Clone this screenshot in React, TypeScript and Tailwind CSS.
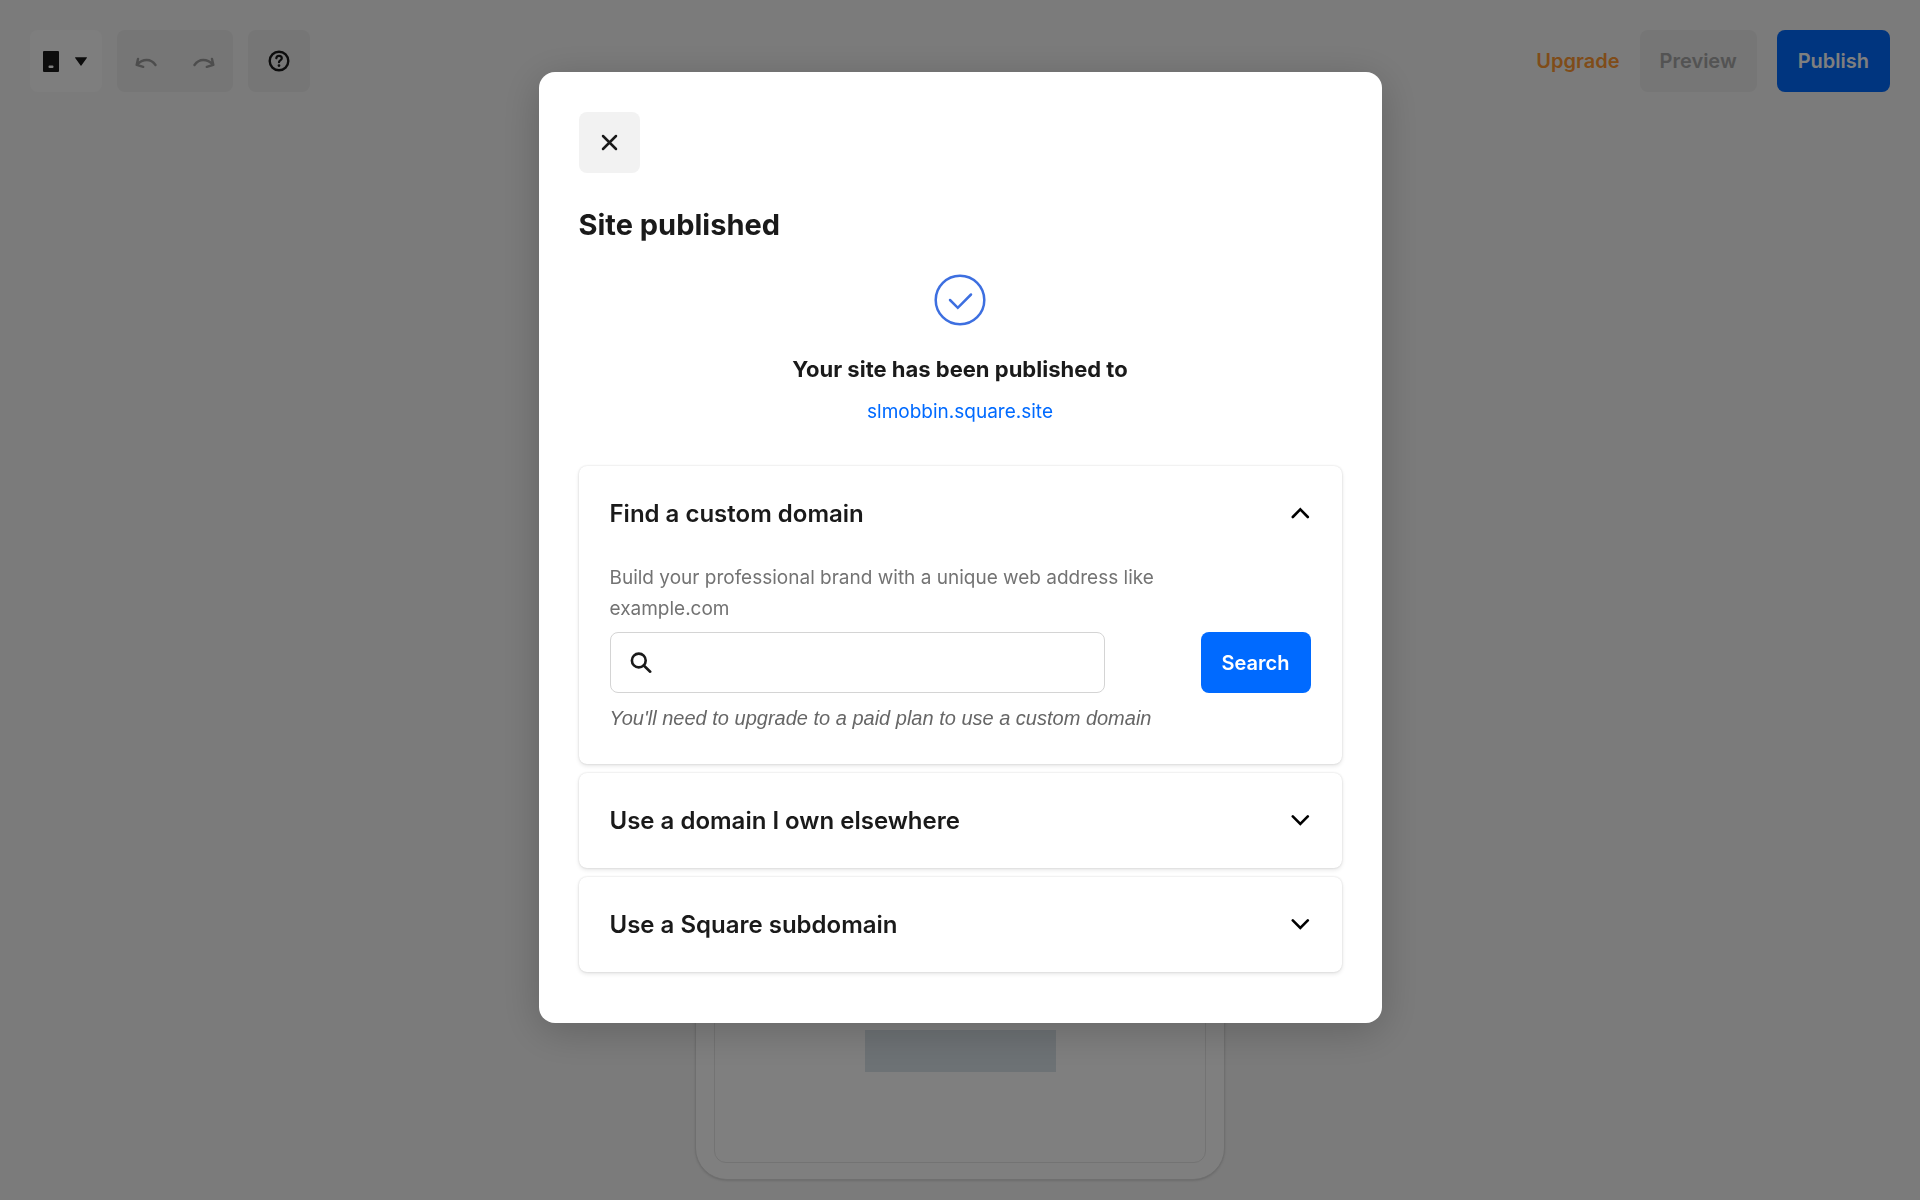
import React, { useState } from 'react';

interface DomainOption {
  id: string;
  title: string;
}

const domainOptions: DomainOption[] = [
  { id: 'custom', title: 'Find a custom domain' },
  { id: 'elsewhere', title: 'Use a domain I own elsewhere' },
  { id: 'subdomain', title: 'Use a Square subdomain' },
];

const Chevron: React.FC<{ open: boolean }> = ({ open }) => (
  <svg
    width="20"
    height="14"
    viewBox="0 0 20 14"
    fill="none"
    stroke="#000"
    strokeWidth="2.6"
    strokeLinecap="round"
    aria-hidden="true"
  >
    {open ? <path d="M1.8 10 9.3 2.4l7.5 7.6" /> : <path d="M1.8 2.4 9.3 9.9l7.5-7.5" />}
  </svg>
);

const EditorHeader: React.FC = () => (
  <header className="flex items-center justify-between px-[30px] pt-[30px] pb-7">
    <div className="flex items-center">
      <button aria-label="Device" className="flex h-[62px] w-[72px] items-center justify-center gap-4 rounded-lg bg-[#fdfdfd] pr-0.5">
        <svg width="16" height="21" viewBox="0 0 16 21" aria-hidden="true">
          <rect width="16" height="21" rx="1" fill="#1a1a1a" />
          <rect x="5.5" y="14.5" width="5" height="2.5" rx="1" fill="#fff" />
        </svg>
        <svg width="12" height="9" viewBox="0 0 12 9" aria-hidden="true">
          <path d="M.5.2h11c.4 0 .6.4.3.8L6.4 8.5c-.2.3-.6.3-.8 0L.2 1C0 .6.1.2.5.2z" fill="#1a1a1a" />
        </svg>
      </button>
      <div className="ml-[15px] flex h-[62px] w-[116px] items-center rounded-lg bg-[#ececec]">
        <button aria-label="Undo" className="flex h-full flex-1 items-center justify-center pt-1">
          <svg width="22" height="12" viewBox="0 0 22 12" fill="none" stroke="#9a9a9a" strokeWidth="2.4" strokeLinecap="round" strokeLinejoin="round" aria-hidden="true">
            <path d="M20.5 8C18 4.5 14.8 3 11.8 3 8.3 3 5 4.3 2.4 7.300M3 2 1.7 7.800l6.500 2" />
          </svg>
        </button>
        <button aria-label="Redo" className="flex h-full flex-1 items-center justify-center pt-1">
          <svg width="22" height="12" viewBox="0 0 22 12" fill="none" stroke="#9a9a9a" strokeWidth="2.4" strokeLinecap="round" strokeLinejoin="round" aria-hidden="true">
            <path d="M1.5 8C4 4.5 7.2 3 10.2 3c3.5 0 6.8 1.3 9.4 4.300M19 2l1.3 5.800-6.500 2" />
          </svg>
        </button>
      </div>
      <button aria-label="Help" className="ml-[15px] flex h-[62px] w-[62px] items-center justify-center rounded-lg bg-[#ececec]">
        <svg width="22" height="22" viewBox="0 0 22 22" fill="none" stroke="#1a1a1a" strokeWidth="2.4" strokeLinecap="round" aria-hidden="true">
          <circle cx="11" cy="11" r="9.3" />
          <path d="M8.3 8.2C8.6 6.7 9.6 5.9 11 5.9c1.6 0 2.8 1 2.8 2.4 0 2-2.8 2.1-2.8 3.9" strokeWidth="2.2" />
          <circle cx="11" cy="15.6" r=".6" fill="#1a1a1a" strokeWidth="1.6" />
        </svg>
      </button>
    </div>
    <div className="flex items-center">
      <a href="#upgrade" className="text-[20px] leading-7 font-semibold text-[#ff9933]">Upgrade</a>
      <button className="ml-5 h-[62px] rounded-lg bg-[#ececec] px-5 text-[20px] font-semibold text-[#a6a6a6]">Preview</button>
      <button className="ml-5 h-[62px] rounded-lg bg-[#006aff] px-[21px] text-[20px] font-semibold text-white">Publish</button>
    </div>
  </header>
);

const DevicePreview: React.FC = () => (
  <main className="flex flex-1 justify-center pb-5">
    <div className="flex w-[530px] rounded-[32px] border border-[#dedede] bg-white px-[18px] pb-4 shadow-sm">
      <div className="flex flex-1 items-end justify-center rounded-xl border border-[#e6e6e6] pb-[90px]">
        <div className="h-[42px] w-[191px] bg-[#dbe4ea]"></div>
      </div>
    </div>
  </main>
);

const CustomDomainForm: React.FC = () => {
  const [query, setQuery] = useState('');

  return (
    <form className="px-[31px] pt-px pb-[30px]" onSubmit={(e) => e.preventDefault()}>
      <p className="max-w-[570px] text-[19px] leading-[31px] text-[#737373]">
        Build your professional brand with a unique web address like example.com
      </p>
      <div className="mt-2 flex items-center justify-between">
        <div className="relative w-[495px]">
          <svg className="absolute top-5 left-5" width="22" height="22" viewBox="0 0 22 22" fill="none" stroke="#1a1a1a" strokeWidth="2.6" strokeLinecap="round" aria-hidden="true">
            <circle cx="8.8" cy="8.5" r="6.9" />
            <path d="m13.8 13.5 6.4 6.2" />
          </svg>
          <input
            type="text"
            aria-label="Domain name"
            value={query}
            onChange={(e) => setQuery(e.target.value)}
            className="h-[61px] w-full rounded-lg border border-[#d4d4d4] pr-4 pl-14 text-[20px] outline-none"
          />
        </div>
        <button type="submit" className="h-[61px] rounded-lg bg-[#006aff] px-[21px] text-[20px] font-semibold text-white">
          Search
        </button>
      </div>
      <p className="mt-[10px] font-['Liberation_Sans',sans-serif] text-[20px] leading-[31px] text-[#666] italic">
        You'll need to upgrade to a paid plan to use a custom domain
      </p>
    </form>
  );
};

const App: React.FC = () => {
  const [openId, setOpenId] = useState('custom');

  return (
    <div className="flex min-h-screen flex-col bg-[#f7f7f7] font-[Inter,sans-serif] text-[#1a1a1a]">
      <EditorHeader />
      <DevicePreview />

      <div className="fixed inset-0 flex items-start justify-center overflow-y-auto bg-black/50 px-6 pt-[72px] pb-10">
        <div
          role="dialog"
          aria-labelledby="dialog-title"
          className="w-full max-w-[843px] rounded-2xl bg-white px-10 pt-10 pb-[51px] shadow-[0_8px_40px_rgba(0,0,0,0.2)]"
        >
          <button aria-label="Close" className="flex h-[61px] w-[61px] items-center justify-center rounded-lg bg-[#f2f2f2]">
            <svg width="17" height="17" viewBox="0 0 17 17" fill="none" stroke="#1a1a1a" strokeWidth="2.5" strokeLinecap="round" aria-hidden="true">
              <path d="m2 2 13 13M15 2 2 15" />
            </svg>
          </button>
          <h1 id="dialog-title" className="mt-8 text-[29px] leading-10 font-bold">Site published</h1>

          <div className="mt-[29px] flex flex-col items-center text-center">
            <svg width="52" height="52" viewBox="0 0 52 52" fill="none" stroke="#3d6fe0" strokeWidth="2.5" strokeLinecap="round" aria-hidden="true">
              <circle cx="26" cy="26" r="24.3" />
              <path d="m16 26 7.800 7.800L37 20.500" />
            </svg>
            <h2 className="mt-[27px] text-[22px] leading-8 font-bold">Your site has been published to</h2>
            <a href="https://slmobbin.square.site" className="mt-3 text-[19px] leading-[30px] text-[#006aff]">slmobbin.square.site</a>
          </div>

          <div className="mt-[39px] flex flex-col gap-[9px]">
            {domainOptions.map((option) => (
              <section key={option.id} className="rounded-lg shadow-[0_0_2px_rgba(0,0,0,0.15),0_2px_4px_rgba(0,0,0,0.1)]">
                <button
                  aria-expanded={openId === option.id}
                  onClick={() => setOpenId(openId === option.id ? '' : option.id)}
                  className="flex h-[95px] w-full items-center justify-between px-[31px] text-left text-[24px] font-semibold"
                >
                  {option.title}
                  <Chevron open={openId === option.id} />
                </button>
                {openId === 'custom' && option.id === 'custom' && <CustomDomainForm />}
              </section>
            ))}
          </div>
        </div>
      </div>
    </div>
  );
};

export default App;
